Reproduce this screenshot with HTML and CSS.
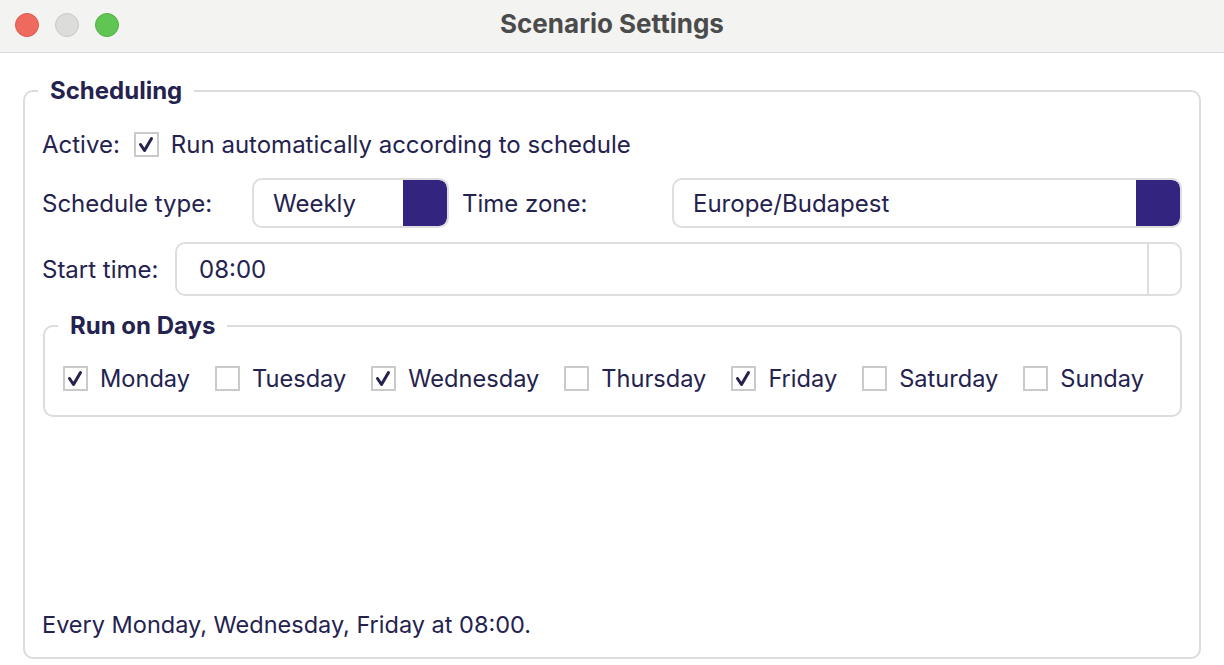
FILE: index.html
```html
<!DOCTYPE html>
<html>
<head>
<meta charset="utf-8">
<link rel="stylesheet" href="styles.css">
</head>
<body>
<div class="titlebar">
  <div class="lights">
    <span class="light red"></span>
    <span class="light grey"></span>
    <span class="light green"></span>
  </div>
  <div class="title">Scenario Settings</div>
</div>
<div class="content">
  <fieldset class="group">
    <legend class="legend">Scheduling</legend>
    <div class="row row-active">
      <span class="label">Active:</span>
      <span class="check on"><svg viewBox="0 0 25 25"><path d="M6.5 12.5 L10.5 18.5 L17.5 6.5"/></svg></span>
      <span class="text">Run automatically according to schedule</span>
    </div>
    <div class="row row-select">
      <span class="label wide">Schedule type:</span>
      <div class="select small"><span class="value">Weekly</span><span class="btn"></span></div>
      <span class="label wide tz">Time zone:</span>
      <div class="select grow"><span class="value">Europe/Budapest</span><span class="btn"></span></div>
    </div>
    <div class="row row-time">
      <span class="label narrow">Start time:</span>
      <div class="input"><span class="value">08:00</span><span class="spin"></span></div>
    </div>
    <fieldset class="days">
      <legend class="legend sub">Run on Days</legend>
      <div class="dayrow">
        <label class="day"><span class="check on"><svg viewBox="0 0 25 25"><path d="M6.5 12.5 L10.5 18.5 L17.5 6.5"/></svg></span>Monday</label>
        <label class="day"><span class="check"></span>Tuesday</label>
        <label class="day"><span class="check on"><svg viewBox="0 0 25 25"><path d="M6.5 12.5 L10.5 18.5 L17.5 6.5"/></svg></span>Wednesday</label>
        <label class="day"><span class="check"></span>Thursday</label>
        <label class="day"><span class="check on"><svg viewBox="0 0 25 25"><path d="M6.5 12.5 L10.5 18.5 L17.5 6.5"/></svg></span>Friday</label>
        <label class="day"><span class="check"></span>Saturday</label>
        <label class="day"><span class="check"></span>Sunday</label>
      </div>
    </fieldset>
    <div class="summary">Every Monday, Wednesday, Friday at 08:00.</div>
  </fieldset>
</div>
</body>
</html>
```
FILE: styles.css
```css
html, body {
  margin: 0;
  padding: 0;
  background: #ffffff;
}
body {
  font-family: Inter, "Noto Sans", sans-serif;
  color: #24224f;
  font-size: 24px;
  width: 1224px;
  height: 665px;
  overflow: hidden;
}
.titlebar {
  height: 52px;
  background: #f3f3f2;
  border-bottom: 1px solid #dbdbdb;
  display: flex;
  align-items: center;
  position: relative;
}
.lights {
  display: flex;
  gap: 16px;
  margin-left: 15px;
  margin-top: -2px;
}
.light {
  width: 24px;
  height: 24px;
  border-radius: 50%;
  box-sizing: border-box;
}
.red { background: #ee6a5f; border: 1px solid #e0574b; }
.grey { background: #dcdcdb; border: 1px solid #c9c9c8; }
.green { background: #61c554; border: 1px solid #51b244; }
.title {
  position: absolute;
  left: 0;
  right: 0;
  top: 0;
  height: 50px;
  line-height: 48px;
  text-align: center;
  font-weight: 700;
  font-size: 26px;
  color: #4b4b4b;
  pointer-events: none;
}
.group {
  margin: 24px 0 0 23px;
  width: 1178px;
  height: 582px;
  box-sizing: border-box;
  border: 2px solid #dcdcdc;
  border-radius: 10px;
  padding: 0 17px 17px 17px;
  display: flex;
  flex-direction: column;
}
.legend {
  font-weight: 700;
  font-size: 24px;
  line-height: 28px;
  padding: 0 12px;
  margin-left: -4px;
}
.row {
  display: flex;
  align-items: center;
}
.row-active {
  height: 30px;
  margin-top: 24px;
}
.row-active .label {
  margin-right: 14px;
}
.row-active .text {
  margin-left: 12px;
}
.check {
  width: 25px;
  height: 25px;
  box-sizing: border-box;
  border: 2px solid #cacaca;
  background: #fff;
  display: inline-flex;
  flex: none;
  position: relative;
}
.check svg {
  position: absolute;
  left: -2px;
  top: -2px;
  width: 25px;
  height: 25px;
  fill: none;
  stroke: #24224f;
  stroke-width: 3;
  stroke-linecap: round;
  stroke-linejoin: round;
}
.row-select {
  height: 50px;
  margin-top: 19px;
}
.label.wide {
  width: 210px;
  flex: none;
}
.label.tz {
  margin-left: 13px;
}
.label.narrow {
  width: 133px;
  flex: none;
}
.select {
  height: 50px;
  box-sizing: border-box;
  border: 2px solid #dedede;
  border-radius: 10px;
  display: flex;
  align-items: center;
  overflow: hidden;
  background: #fff;
}
.select.small {
  width: 197px;
  flex: none;
}
.select.grow {
  flex: 1;
}
.select .value {
  flex: 1;
  padding-left: 19px;
}
.select .btn {
  width: 44px;
  height: 100%;
  background: #33247f;
  border-radius: 0 8px 8px 0;
}
.row-time {
  height: 54px;
  margin-top: 14px;
}
.input {
  flex: 1;
  height: 54px;
  box-sizing: border-box;
  border: 2px solid #dedede;
  border-radius: 10px;
  display: flex;
  align-items: center;
}
.input .value {
  flex: 1;
  padding-left: 22px;
}
.input .spin {
  width: 31px;
  height: 100%;
  border-left: 2px solid #dedede;
}
.days {
  margin: 16px 0 0 1px;
  border: 2px solid #dcdcdc;
  border-radius: 10px;
  padding: 0 18px 22px 18px;
  min-width: 0;
}
.legend.sub {
  margin-left: -5px;
}
.dayrow {
  display: flex;
  align-items: center;
  height: 30px;
  margin-top: 23px;
  gap: 25px;
  font-size: 23.6px;
}
.day {
  display: flex;
  align-items: center;
  gap: 12px;
}
.summary {
  margin-top: auto;
  height: 30px;
  line-height: 30px;
  font-size: 23.5px;
}
```
